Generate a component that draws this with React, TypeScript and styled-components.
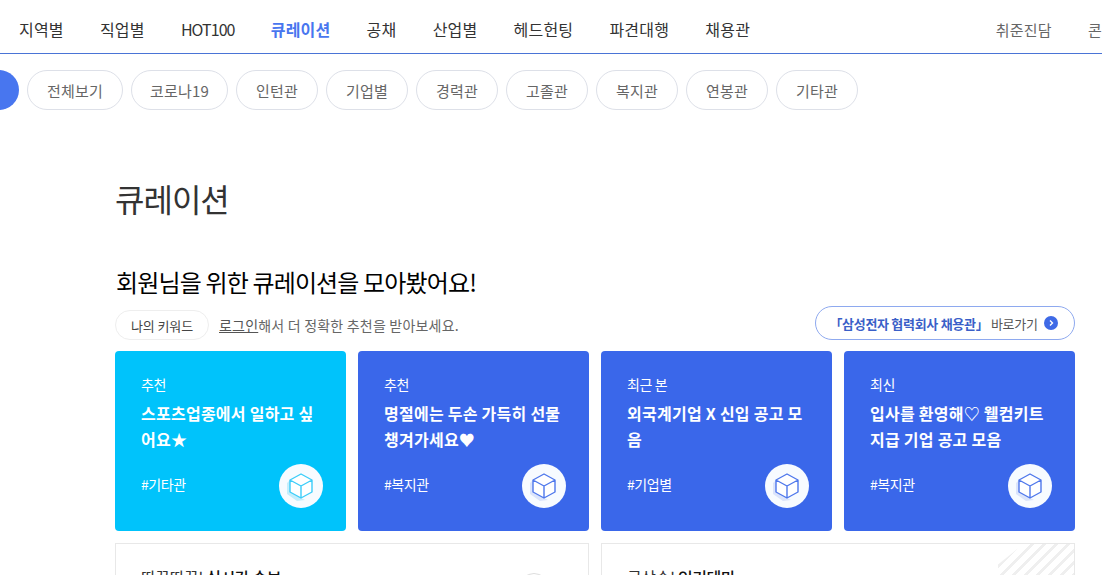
import styled, { createGlobalStyle } from "styled-components";

const GlobalStyle = createGlobalStyle`
	html, body {
		margin: 0;
		padding: 0;
		height: 575px;
		overflow: hidden;
		background: #fff;
		font-family: "Noto Sans CJK KR", "Noto Sans", sans-serif;
	}
	* {
		box-sizing: border-box;
	}
`;

const Page = styled.div`
	width: 1102px;
	height: 575px;
	overflow: hidden;
`;

const TopNav = styled.nav`
	display: flex;
	justify-content: space-between;
	height: 54px;
	padding-left: 19px;
	border-bottom: 1px solid #4a74d6;
	overflow: hidden;
`;

const NavGroup = styled.div<{ $bleed?: number }>`
	display: flex;
	flex: none;
	align-items: center;
	gap: 36.2px;
	height: 58px;
	margin-right: ${(p) => -(p.$bleed ?? 0)}px;
	white-space: nowrap;
`;

const NavItem = styled.a<{ $active?: boolean }>`
	font-size: 16px;
	letter-spacing: 0.2px;
	font-weight: ${(p) => (p.$active ? 700 : 400)};
	color: ${(p) => (p.$active ? "#4876ef" : "#333")};
`;

const LatinNavItem = styled(NavItem)`
	letter-spacing: -0.95px;
`;

const UtilItem = styled.a`
	font-size: 15px;
	letter-spacing: 0.2px;
	color: #666;
`;

const PillRow = styled.div`
	display: flex;
	align-items: center;
	gap: 8px;
	margin: 16px 0 0 -22px;
`;

const RoundMark = styled.span`
	flex: none;
	width: 41px;
	height: 40px;
	border-radius: 50%;
	background: #4876ef;
`;

const Pill = styled.a<{ $width: number }>`
	flex: none;
	display: flex;
	align-items: center;
	justify-content: center;
	width: ${(p) => p.$width}px;
	height: 40px;
	border: 1px solid #dde0e8;
	border-radius: 20px;
	font-size: 15px;
	letter-spacing: 0.2px;
	color: #666;
`;

const Content = styled.main`
	width: 960px;
	margin-left: 115px;
`;

const PageTitle = styled.h1`
	margin: 65px 0 0;
	font-size: 32px;
	line-height: 46px;
	font-weight: 400;
	letter-spacing: -1px;
	color: #333;
`;

const SectionTitle = styled.h2`
	margin: 45px 0 0;
	padding-left: 1px;
	font-size: 24px;
	line-height: 32px;
	font-weight: 400;
	letter-spacing: -0.85px;
	color: #000;
`;

const InfoRow = styled.div`
	display: flex;
	align-items: center;
	justify-content: space-between;
	height: 34px;
	margin-top: 8px;
`;

const InfoLeft = styled.div`
	display: flex;
	align-items: center;
	gap: 10px;
	padding-top: 4px;
	font-size: 14px;
	letter-spacing: 0.2px;
	color: #666;
`;

const Keyword = styled.span`
	display: flex;
	align-items: center;
	justify-content: center;
	width: 94px;
	height: 30px;
	border: 1px solid #eee;
	border-radius: 15px;
	font-size: 13px;
	letter-spacing: -0.1px;
	color: #444;
`;

const LoginLink = styled.a`
	color: #555;
	text-decoration: underline;
`;

const ShortcutButton = styled.a`
	display: flex;
	align-items: center;
	justify-content: center;
	gap: 6px;
	width: 260px;
	height: 34px;
	padding-right: 3px;
	border: 1px solid #8ea9ef;
	border-radius: 17px;
	font-size: 13px;
	letter-spacing: -0.3px;
	color: #555;
`;

const ShortcutStrong = styled.strong`
	font-weight: 700;
	color: #3a5fc8;
`;

const ShortcutDot = styled.span`
	display: flex;
	align-items: center;
	justify-content: center;
	width: 14px;
	height: 14px;
	border-radius: 50%;
	background: #3f6ae6;
`;

const CardGrid = styled.div`
	display: grid;
	grid-template-columns: repeat(4, 231px);
	gap: 12px;
	margin-top: 11px;
`;

const Card = styled.a<{ $bg: string }>`
	position: relative;
	display: flex;
	flex-direction: column;
	height: 180px;
	padding: 22px 26px 0;
	border-radius: 4px;
	background: ${(p) => p.$bg};
	color: #fff;
`;

const CardLabel = styled.span`
	font-size: 14px;
	line-height: 22px;
	letter-spacing: -0.4px;
`;

const CardTitle = styled.strong`
	margin-top: 5px;
	height: 52px;
	font-size: 16px;
	line-height: 26px;
	font-weight: 700;
	letter-spacing: 0.25px;
	word-break: break-all;
`;

const CardTag = styled.span`
	margin-top: 21px;
	font-size: 14px;
	line-height: 22px;
	letter-spacing: -0.4px;
`;

const CubeBadge = styled.span`
	position: absolute;
	right: 23px;
	bottom: 23px;
	display: flex;
	align-items: center;
	justify-content: center;
	width: 44px;
	height: 44px;
	border-radius: 50%;
	background: #f7fbff;
`;

const BoxGrid = styled.div`
	display: grid;
	grid-template-columns: repeat(2, 474px);
	gap: 12px;
	margin-top: 12px;
`;

const Box = styled.section`
	position: relative;
	height: 120px;
	padding: 21px 25px;
	border: 1px solid #e8e8e8;
	overflow: hidden;
`;

const BoxTitle = styled.h3`
	margin: 0;
	font-size: 16px;
	line-height: 24px;
	font-weight: 400;
	letter-spacing: -0.4px;
	color: #333;

	strong {
		font-weight: 500;
		color: #111;
	}
`;

const Stripes = styled.span`
	position: absolute;
	top: 0;
	right: 0;
	width: 76px;
	height: 60px;
	background: repeating-linear-gradient(
		135deg,
		transparent 0 6px,
		#efefef 6px 8.5px
	);
	clip-path: polygon(34% 0, 100% 0, 100% 100%, 0 100%, 0 34%);
`;

const ArcMark = styled.span`
	position: absolute;
	top: 29px;
	right: 39px;
	width: 30px;
	height: 30px;
	border: 1px solid #ddd;
	border-radius: 50%;
`;

const Cube = ({ color, shade }: { color: string; shade: string }) => (
	<svg width="32" height="32" viewBox="0 0 32 32" fill="none">
		<path d="M2 13 L2 24 L12 31 L20 30 L16 28 L5 22 L5 10 Z" fill={shade} />
		<path d="M16 4 L27 10 L27 22 L16 28 L5 22 L5 10 Z" fill="#fff" />
		<path
			d="M16 4 L27 10 L27 22 L16 28 L5 22 L5 10 Z M5 10 L16 16 L27 10 M16 16 L16 28"
			stroke={color}
			strokeWidth="1.4"
			strokeLinejoin="round"
			fill="none"
		/>
	</svg>
);

const navItems = ["지역별", "직업별", "HOT100", "큐레이션", "공채", "산업별", "헤드헌팅", "파견대행", "채용관"];

const pills = [
	{ label: "전체보기", width: 96 },
	{ label: "코로나19", width: 97 },
	{ label: "인턴관", width: 82 },
	{ label: "기업별", width: 82 },
	{ label: "경력관", width: 82 },
	{ label: "고졸관", width: 82 },
	{ label: "복지관", width: 82 },
	{ label: "연봉관", width: 82 },
	{ label: "기타관", width: 82 },
];

const cards = [
	{ label: "추천", title: "스포츠업종에서 일하고 싶어요★", tag: "#기타관", bg: "#00c3fb", icon: "#3ccdf9", shade: "#c4eefc" },
	{ label: "추천", title: "명절에는 두손 가득히 선물 챙겨가세요♥", tag: "#복지관", bg: "#3a67ea", icon: "#4f78ec", shade: "#dbe4fb" },
	{ label: "최근 본", title: "외국계기업 X 신입 공고 모음", tag: "#기업별", bg: "#3a67ea", icon: "#4f78ec", shade: "#dbe4fb" },
	{ label: "최신", title: "입사를 환영해♡ 웰컴키트 지급 기업 공고 모음", tag: "#복지관", bg: "#3a67ea", icon: "#4f78ec", shade: "#dbe4fb" },
];

const App = () => {
	return (
		<Page>
			<GlobalStyle />
			<TopNav>
				<NavGroup>
					{navItems.map((item) =>
						item === "HOT100" ? (
							<LatinNavItem key={item}>{item}</LatinNavItem>
						) : (
							<NavItem key={item} $active={item === "큐레이션"}>
								{item}
							</NavItem>
						)
					)}
				</NavGroup>
				<NavGroup $bleed={28}>
					<UtilItem>취준진담</UtilItem>
					<UtilItem>콘텐츠</UtilItem>
				</NavGroup>
			</TopNav>

			<PillRow>
				<RoundMark />
				{pills.map((pill) => (
					<Pill key={pill.label} $width={pill.width}>
						{pill.label}
					</Pill>
				))}
			</PillRow>

			<Content>
				<PageTitle>큐레이션</PageTitle>
				<SectionTitle>회원님을 위한 큐레이션을 모아봤어요!</SectionTitle>
				<InfoRow>
					<InfoLeft>
						<Keyword>나의 키워드</Keyword>
						<span>
							<LoginLink>로그인</LoginLink>해서 더 정확한 추천을 받아보세요.
						</span>
					</InfoLeft>
					<ShortcutButton>
						<span>
							<ShortcutStrong>「삼성전자 협력회사 채용관」</ShortcutStrong> 바로가기
						</span>
						<ShortcutDot>
							<svg width="8" height="8" viewBox="0 0 8 8" fill="none">
								<path d="M3 1.5 L5.5 4 L3 6.5" stroke="#fff" strokeWidth="1.4" />
							</svg>
						</ShortcutDot>
					</ShortcutButton>
				</InfoRow>

				<CardGrid>
					{cards.map((card) => (
						<Card key={card.title} $bg={card.bg}>
							<CardLabel>{card.label}</CardLabel>
							<CardTitle>{card.title}</CardTitle>
							<CardTag>{card.tag}</CardTag>
							<CubeBadge>
								<Cube color={card.icon} shade={card.shade} />
							</CubeBadge>
						</Card>
					))}
				</CardGrid>

				<BoxGrid>
					<Box>
						<BoxTitle>
							따끈따끈! <strong>실시간 속보</strong>
						</BoxTitle>
						<ArcMark />
					</Box>
					<Box>
						<BoxTitle>
							급상승! <strong>인기테마</strong>
						</BoxTitle>
						<Stripes />
					</Box>
				</BoxGrid>
			</Content>
		</Page>
	);
};

export default App;
